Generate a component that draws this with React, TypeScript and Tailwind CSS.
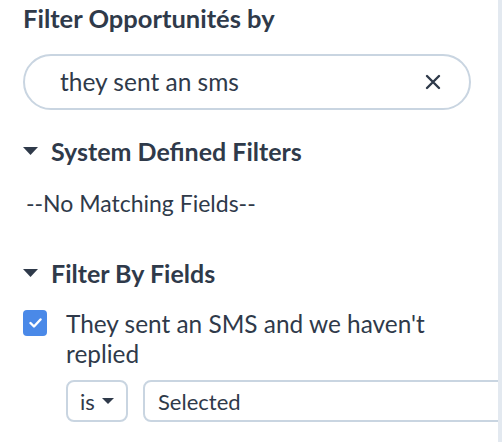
import React, { useState } from 'react'

const Caret = () => (
  <svg width="15" height="8" viewBox="0 0 15 8" className="shrink-0">
    <path d="M0 0 L15 0 L7.5 8 Z" fill="#2f3a4a" />
  </svg>
)

export default function App() {
  const [query, setQuery] = useState('they sent an sms')
  const [checked, setChecked] = useState(true)

  return (
    <div className="w-[502px] h-[442px] bg-white overflow-hidden flex" style={{ fontFamily: 'Lato, "Noto Sans", sans-serif' }}>
      <div className="w-[498px] h-full overflow-hidden pl-[23px] pt-[3px] text-[#2f3a4a]">
        <h2 className="text-[25.5px] leading-[30px] font-bold">Filter Opportunités by</h2>

        <div className="mt-[21px] w-[448px] h-[56px] rounded-full border-2 border-[#c9d5e1] flex items-center pl-[35px] pr-[28px]">
          <input
            value={query}
            onChange={(e) => setQuery(e.target.value)}
            className="flex-1 min-w-0 bg-transparent outline-none text-[24.5px] text-[#2f3a4a]"
          />
          <button onClick={() => setQuery('')} className="text-[#2f3a4a]">
            <svg width="16" height="16" viewBox="0 0 16 16">
              <path d="M2 2 L14 14 M14 2 L2 14" stroke="#2f3a4a" strokeWidth="2.4" strokeLinecap="round" />
            </svg>
          </button>
        </div>

        <div className="mt-[26px] flex items-center gap-[13px]">
          <Caret />
          <span className="text-[25px] leading-[30px] font-bold">System Defined Filters</span>
        </div>
        <p className="mt-[22px] ml-[3px] text-[23px] leading-[30px]">--No Matching Fields--</p>

        <div className="mt-[40px] flex items-center gap-[13px]">
          <Caret />
          <span className="text-[25px] leading-[30px] font-bold">Filter By Fields</span>
        </div>

        <div className="mt-[21px] flex items-start gap-[19px]">
          <button
            onClick={() => setChecked(!checked)}
            className={`mt-[1px] w-[24px] h-[26px] rounded-[4px] flex items-center justify-center shrink-0 ${checked ? 'bg-[#4a89e8]' : 'border-2 border-[#c9d5e1]'}`}
          >
            {checked && (
              <svg width="13" height="10" viewBox="0 0 13 10">
                <path d="M1.5 5 L5 8.5 L11.5 1.5" stroke="white" strokeWidth="2.4" fill="none" strokeLinecap="round" strokeLinejoin="round" />
              </svg>
            )}
          </button>
          <div className="flex-1">
            <p className="text-[24.4px] leading-[30px] w-[400px]">They sent an SMS and we haven't replied</p>
            <div className="mt-[11px] flex gap-[15px]">
              <div className="w-[62px] h-[42px] shrink-0 rounded-[8px] border-2 border-[#c9d5e1] flex items-center pl-[12px] gap-[7px]">
                <span className="text-[22px]">is</span>
                <svg width="12" height="6" viewBox="0 0 12 6">
                  <path d="M0 0 L12 0 L6 6 Z" fill="#2f3a4a" />
                </svg>
              </div>
              <div className="w-[400px] h-[42px] shrink-0 rounded-[8px] border-2 border-[#c9d5e1] flex items-center pl-[13px]">
                <span className="text-[22px]">Selected</span>
              </div>
            </div>
          </div>
        </div>
      </div>
      <div className="w-[4px] h-full bg-[#e3e9f0]" />
    </div>
  )
}
